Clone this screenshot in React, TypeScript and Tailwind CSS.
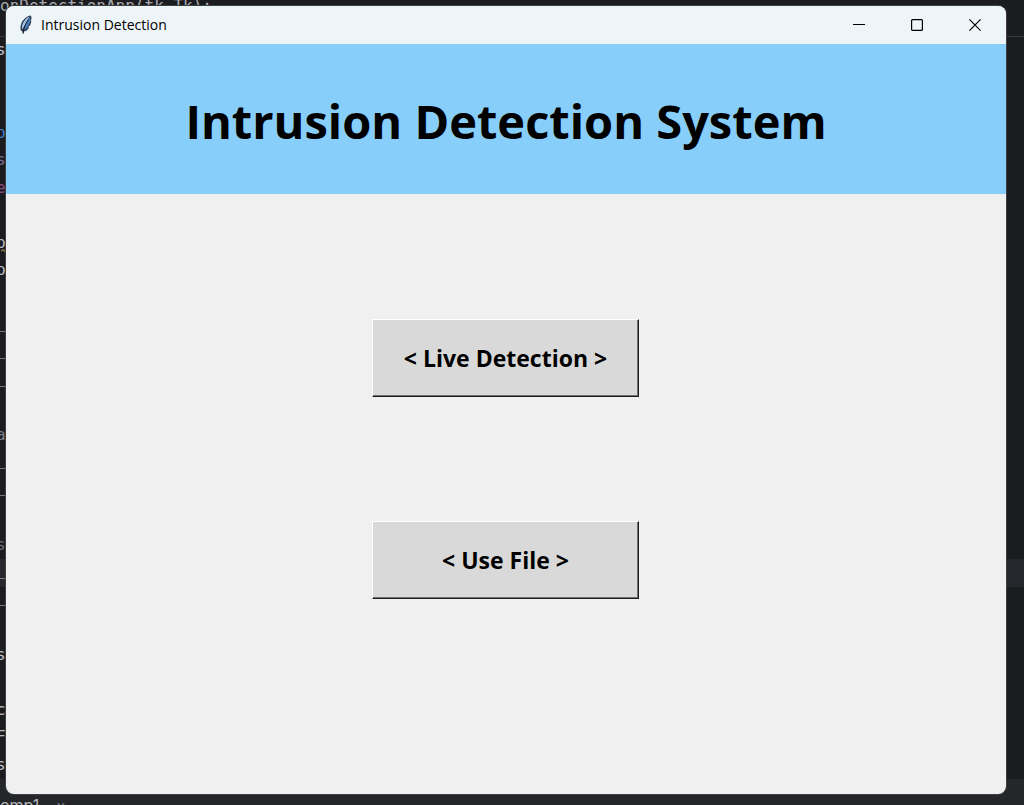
import React from "react";

type CodeLine = { text: string; tone: string };

const blank: CodeLine = { text: "", tone: "" };

const codeLines: CodeLine[] = [
  { text: "se", tone: "pb-px text-[#bcbec4]" },
  blank,
  blank,
  { text: "pa", tone: "pb-px text-[#3f7fd0]" },
  { text: "se", tone: "pb-px text-[#7d6a94]" },
  { text: "el", tone: "pb-px text-[#8a4a86]" },
  blank,
  { text: "pa", tone: "pb-px text-[#bcbec4] underline decoration-wavy decoration-[#857042]" },
  { text: "pa", tone: "pb-px text-[#bcbec4]" },
  blank,
  { text: "_l", tone: "pb-1.5 text-[#bcbec4]" },
  { text: "_i", tone: "pb-1.5 text-[#bcbec4]" },
  { text: "_i", tone: "pb-1.5 text-[#bcbec4]" },
  blank,
  { text: "at", tone: "pb-px text-[#7a7e85]" },
  { text: "_i", tone: "pb-1.5 text-[#bcbec4]" },
  { text: "_i", tone: "pb-1.5 text-[#bcbec4]" },
  blank,
  { text: "se", tone: "pb-px text-[#6a6d74]" },
  { text: "_l", tone: "pb-1.5 text-[#bcbec4] bg-[#26282e]" },
  { text: "_l", tone: "pb-1.5 text-[#bcbec4]" },
  blank,
  { text: "st", tone: "pb-px text-[#bcbec4]" },
  blank,
  { text: "ca", tone: "pb-px text-[#bcbec4]" },
  { text: "F", tone: "pb-px text-[#bcbec4]" },
  { text: "se", tone: "pb-px text-[#bcbec4]" },
];

function EditorBackdrop() {
  return (
    <div
      aria-hidden="true"
      className="absolute inset-0 flex flex-col overflow-hidden bg-[#1b1c1f] font-['DejaVu_Sans_Mono','Liberation_Mono',monospace] text-base"
    >
      <div className="flex h-[37px] shrink-0 items-start border-b border-[#393b40]">
        <span className="-mt-1.5 leading-6 text-[#a9abb0]">onDetectionApp(tk.Tk):</span>
      </div>
      <div className="grid min-h-0 flex-1 auto-rows-fr">
        {codeLines.map((line, i) => (
          <div key={i} className={`flex min-h-0 items-center ${line.tone}`}>
            <span className="-ml-1 leading-5">{line.text}</span>
          </div>
        ))}
      </div>
      <div className="flex h-[26px] shrink-0 items-start gap-4 bg-[#25262a] pt-3.5 font-['Inter',sans-serif] leading-6 text-[#b4b6bb]">
        <span>omp1</span>
        <span className="text-[#7a7e85]">×</span>
      </div>
    </div>
  );
}

function FeatherIcon() {
  return (
    <svg width="14" height="20" viewBox="0 0 14 20" aria-hidden="true">
      <path
        d="M11.4.6C8.2 1.2 4.4 4 2.400 8.2c-1.2 3-1.3 5.800-.3 7.6l1.600 1 .3 2.800 1-3c2.400-.6 4-2 5-4.2l-.8-.4 1.800-1.4c.8-2 1.300-3.8 1.300-5.2l-.9-.2 1.100-1.2c.2-1.700-.3-2.900-1.100-3.400z"
        fill="#2c3f57"
      />
      <path d="M10.400 1.600C7.200 3 4.600 6.200 3.400 9.600c-.6 2-.5 3.800-.1 5L7.800 7z" fill="#a9c4e2" />
      <path d="M11 2.200 7.200 8.600l-2.600 6.600c2-.8 3.600-2.200 4.400-4.200 1.800-3.200 2.800-6.400 2-8.800z" fill="#4a80c0" />
      <path d="M9.400 4.400C6.800 8 5 12 4 18.500" fill="none" stroke="#121b29" strokeWidth="1" />
    </svg>
  );
}

const captionButton = "flex w-[58px] items-center justify-center hover:bg-black/5";

function TitleBar() {
  return (
    <header className="flex h-[38px] shrink-0 bg-[#eef5f9] text-black">
      <div className="flex flex-1 items-center gap-2 pl-[13px]">
        <FeatherIcon />
        <span className="pb-px text-sm leading-5">Intrusion Detection</span>
      </div>
      <div className="flex pr-0.5">
        <button type="button" aria-label="Minimize" className={captionButton}>
          <svg width="12" height="12" viewBox="0 0 12 12" fill="none" stroke="currentColor">
            <path d="M0 5.500h12" />
          </svg>
        </button>
        <button type="button" aria-label="Maximize" className={captionButton}>
          <svg width="12" height="12" viewBox="0 0 12 12" fill="none" stroke="currentColor" strokeWidth="1.200">
            <rect x=".6" y=".6" width="10.800" height="10.800" rx="1" />
          </svg>
        </button>
        <button type="button" aria-label="Close" className={captionButton}>
          <svg width="12" height="12" viewBox="0 0 12 12" fill="none" stroke="currentColor" strokeWidth="1.200">
            <path d="m.4.4 11.200 11.200M11.600.4.4 11.600" />
          </svg>
        </button>
      </div>
    </header>
  );
}

function RaisedButton({ children }: { children: React.ReactNode }) {
  return (
    <button
      type="button"
      className="h-[78px] w-[267px] border border-t-white border-r-[#1c1c1c] border-b-[#1c1c1c] border-l-white bg-[#d9d9d9] text-[23px] font-bold text-black shadow-[inset_-1px_-1px_0_#707070] active:border-[#808080]"
    >
      {children}
    </button>
  );
}

export default function App() {
  return (
    <div className="relative flex min-h-screen flex-col pt-1.5 pr-[18px] pb-[11px] pl-1.5 font-['Segoe_UI','Open_Sans',sans-serif]">
      <EditorBackdrop />
      <div className="relative flex flex-1 flex-col overflow-hidden rounded-lg bg-[#f0f0f0] shadow-[0_0_0_1px_#3d3f43]">
        <TitleBar />
        <div className="flex h-[150px] shrink-0 items-center justify-center bg-[#87cefa] pt-1">
          <h1 className="text-[47px] leading-none font-bold text-black">Intrusion Detection System</h1>
        </div>
        <main className="flex flex-1 flex-col items-center gap-[124px] pt-[125px] pr-px pb-16">
          <RaisedButton>&lt; Live Detection &gt;</RaisedButton>
          <RaisedButton>&lt; Use File &gt;</RaisedButton>
        </main>
      </div>
    </div>
  );
}
